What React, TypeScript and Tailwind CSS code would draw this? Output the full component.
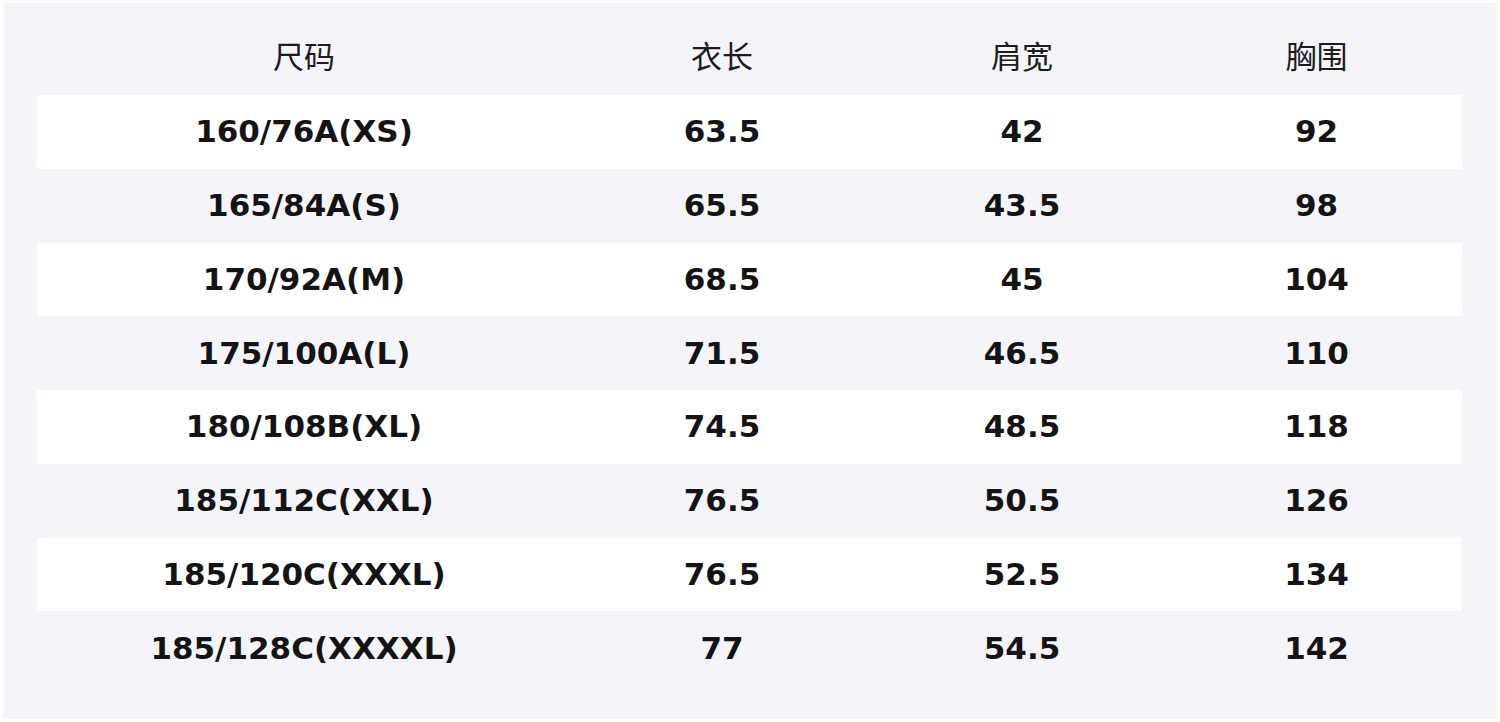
const headers = ["尺码", "衣长", "肩宽", "胸围"];

const rows: string[][] = [
  ["160/76A(XS)", "63.5", "42", "92"],
  ["165/84A(S)", "65.5", "43.5", "98"],
  ["170/92A(M)", "68.5", "45", "104"],
  ["175/100A(L)", "71.5", "46.5", "110"],
  ["180/108B(XL)", "74.5", "48.5", "118"],
  ["185/112C(XXL)", "76.5", "50.5", "126"],
  ["185/120C(XXXL)", "76.5", "52.5", "134"],
  ["185/128C(XXXXL)", "77", "54.5", "142"],
];

const cols = "grid grid-cols-[534px_302px_298px_1fr]";

export default function App() {
  return (
    <div className="w-[1500px] h-[722px] bg-white p-[3px]">
      <div className="h-[716px] bg-[#f4f4f9] pt-[18px] pl-[34px] pr-[35px]">
        {/* header */}
        <div
          className={`${cols} h-[74px] pb-[8px] items-center text-[31px] text-[#1c1c1e]`}
          style={{ fontFamily: '"Noto Sans CJK SC", sans-serif' }}
        >
          {headers.map((h) => (
            <div key={h} className="text-center leading-none">
              {h}
            </div>
          ))}
        </div>

        {/* body rows, every other one white */}
        {rows.map((r, i) => (
          <div
            key={r[0]}
            className={`${cols} h-[73.75px] items-center text-[31px] font-bold text-[#141416] ${
              i % 2 === 0 ? "bg-white" : ""
            }`}
            style={{ fontFamily: '"DejaVu Sans", sans-serif' }}
          >
            {r.map((c, j) => (
              <div key={j} className="text-center leading-none">
                {c}
              </div>
            ))}
          </div>
        ))}
      </div>
    </div>
  );
}
